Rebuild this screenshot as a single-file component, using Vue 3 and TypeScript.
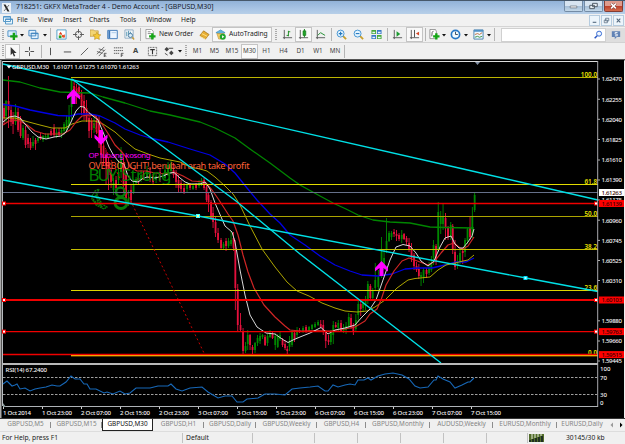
<template>
  <div class="terminal">
    <header class="title-bar">
      <svg class="app-icon" viewBox="0 0 9 10"><path d="M0 0h9v10H0z" fill="#edf2f6" /><path d="M1.5 1.5h2l4 7h-2z" fill="#222" /><path d="M7 2 2 8" stroke="#444" stroke-width=".7" /></svg>
      <span class="title">718251: GKFX MetaTrader 4 - Demo Account - [GBPUSD,M30]</span>
      <div class="window-buttons">
        <button><svg viewBox="0 0 18 10"><path d="M5.5 5h7v2h-7z" fill="#fff" stroke="#5c6672" stroke-width=".7" /></svg></button>
        <button><svg viewBox="0 0 18 10"><path d="M8 2.2h5v3.5H8zM5 4.3h5v3.5H5z" fill="#e8eef4" stroke="#4e5864" /></svg></button>
        <button class="close"><svg viewBox="0 0 18 10"><path d="m6.5 2.5 5 5m0-5-5 5" stroke="#70362f" stroke-width="2.7" /><path d="m6.5 2.5 5 5m0-5-5 5" stroke="#fff" stroke-width="1.6" /></svg></button>
      </div>
    </header>

    <nav class="menu-bar">
      <svg class="menu-icon" viewBox="0 0 10 9"><path d="M.5.5h7v5h-7zM2.5 3h7v5h-7z" fill="#e9f6fd" stroke="#5b9bc9" /><path d="M.5 1h7M2.5 3.4h7" stroke="#4a90c8" /></svg>
      <span
        v-for="item in menus"
        :key="item.label"
        :style="{ width: item.w + 'px' }"
      >{{ item.label }}</span>
      <div class="mdi-buttons">
        <button><svg viewBox="0 0 10 10"><path d="M3 7h4" stroke="#52677c" stroke-width="1.2" /></svg></button>
        <button><svg viewBox="0 0 10 10"><path d="M4 2.5h3.5v3H4zM2.5 4.5H6v3H2.5z" fill="#f2f7fb" stroke="#52677c" stroke-width=".8" /></svg></button>
        <button><svg viewBox="0 0 10 10"><path d="m3 3 4 4m0-4L3 7" stroke="#52677c" stroke-width="1.2" /></svg></button>
      </div>
    </nav>

    <div class="toolbar main-tools">
      <div
        v-for="(tool, i) in mainTools"
        :key="i"
        class="tool"
        :class="[tool.icon, { pressed: tool.pressed }]"
        :style="{ width: tool.w + 'px' }"
      >
        <svg
          v-if="icons[tool.icon]"
          viewBox="0 0 12 12"
          v-html="icons[tool.icon]"
        />
        <span v-if="tool.label">{{ tool.label }}</span>
      </div>
      <div class="search">
        <svg viewBox="0 0 12 12"><circle cx="7.3" cy="4.4" r="3" fill="#eef6ff" stroke="#3b6fd6" stroke-width="1.2" /><path d="M5 7 2 10" stroke="#2a55c0" stroke-width="1.8" /></svg>
      </div>
      <div class="community">
        <svg viewBox="0 0 12 12"><path d="M1 1.5h10v7H7L4.5 11V8.5H1z" fill="#6283b5" /><path d="M7.8 3H5v2h2.5v2H4.7" fill="none" stroke="#fff" /></svg>
      </div>
    </div>

    <div class="toolbar line-tools">
      <div
        v-for="(tool, i) in lineTools"
        :key="i"
        class="tool"
        :class="[tool.icon, { pressed: tool.pressed }]"
        :style="{ width: tool.w + 'px' }"
      >
        <svg
          v-if="icons[tool.icon]"
          viewBox="0 0 12 12"
          v-html="icons[tool.icon]"
        />
        <span v-if="tool.label">{{ tool.label }}</span>
      </div>
    </div>

    <svg class="chart" width="625" height="359" viewBox="0 59 625 359">
      <rect x="0" y="59" width="625" height="359" fill="#f0f0f0" />
      <rect x="0" y="59" width="625" height="1.5" fill="#555" />
      <rect x="1" y="60" width="623" height="358" fill="#000" />
      <path d="M0 60V418" stroke="#aaa" stroke-width="2" />
      <path d="M1.5 60V418" stroke="#555" />
      <path d="M2.5 61V406" stroke="#b8bcc0" />
      <path d="M3 61.5H598" stroke="#ddd" />
      <path d="M475 62h5l-2.5 3z" fill="#8391a5" />

      <!-- K线 -->
      <g v-for="(c, i) in candles" :key="i" :fill="c[5] ? '#008800' : '#e4103c'">
        <rect :x="c[0] - 0.4" :y="c[1]" width="0.9" :height="c[2] - c[1]" />
        <rect :x="c[0] - 0.85" :y="c[3]" width="1.8" :height="c[4] - c[3]" />
      </g>

      <g fill="none" stroke-linejoin="round">
        <polyline
          v-for="avg in averages"
          :key="avg.color"
          :points="avg.points"
          :stroke="avg.color"
          :stroke-width="avg.width"
        />
      </g>

      <!-- 信号文字 -->
      <g class="signal">
        <text x="88.5" y="181" font-size="17" textLength="29" fill="#008000">BUY</text>
        <text x="122" y="181" font-size="17" textLength="49.5" fill="#008000">Strong</text>
        <g fill="none" stroke="#087b08">
          <path d="m92 196 3-5 4-2-2 6 5 9 5 3-3 2-8-4-4-6zM93 199l5 6M95 195l7 12M96 192l2 12M94 202l9 5" stroke-width="1.3" stroke-dasharray="2 .6" />
          <circle cx="120.5" cy="192" r="4.5" stroke-width="2.6" />
          <ellipse cx="121" cy="203" rx="6" ry="5.5" stroke-width="2.8" />
        </g>
        <text x="88.5" y="158" font-size="7.8" textLength="62" fill="#f0f">OP lubang kosong</text>
        <text x="88.5" y="168.5" font-size="9.2" textLength="161" fill="#ff6038">OVERBOUGHT!,berubah arah take profit</text>
      </g>

      <path d="M3 192.5H598" stroke="#66708a" />
      <g v-for="fib in fibs" :key="fib.label">
        <path :d="`M71 ${fib.y}H598`" :stroke="fib.color" />
        <text class="fib" :x="597" :y="fib.y - 1" text-anchor="end">{{ fib.label }}</text>
      </g>
      <path d="M72 79 204 353" stroke="#c80000" stroke-dasharray="2 2.5" />
      <g v-for="level in levels" :key="level.price">
        <path :d="`M3 ${level.y}H598`" stroke="#f00000" :stroke-width="level.width" />
        <template v-if="level.handles">
          <rect x="2.5" :y="level.y - 1.5" width="3" height="3" fill="#fff" stroke="#f00" />
          <rect x="594.5" :y="level.y - 1.5" width="3" height="3" fill="#fff" stroke="#f00" />
        </template>
      </g>
      <path d="M71 355.7H598" stroke="#ffb000" />

      <g stroke="#00e0e6" stroke-width="1.4">
        <path d="M3 64 160 100 460 168.3 598 200" fill="none" />
        <path d="M3 180 198 216 526 278 598 291.5" fill="none" />
        <path d="M72 79 236 201 300 254 441 363" fill="none" />
      </g>
      <rect x="196.5" y="214.5" width="3" height="3" fill="#efff9a" stroke="#4ff" />
      <rect x="524" y="276.5" width="3" height="3" fill="#b8ffff" stroke="#0df" />

      <g fill="#f0f">
        <path v-for="a in arrows" :key="a" :transform="a" d="M0 0 6.5 7V10.5L2 7V15H-2V7L-6.5 10.5V7z" />
      </g>

      <path d="M3 364H598" stroke="#b9b9b9" stroke-width="2" />
      <path d="M597.7 61V407" stroke="#a9a9ae" />
      <path d="M6.5 65.5h5l-2.5 3z" fill="#fff" />
      <text class="caption" x="12" y="68.5" textLength="37">GBPUSD,M30</text>
      <text class="caption" x="52.5" y="68.5" textLength="86.5">1.61071 1.61275 1.61070 1.61263</text>

      <!-- 价格轴 -->
      <g v-for="p in prices" :key="p.label">
        <path :d="`M598 ${p.y}h2`" stroke="#aaa" />
        <text class="axis" x="601.5" :y="p.y + 2.4" textLength="20.5">{{ p.label }}</text>
      </g>
      <rect x="599" y="189" width="25" height="7" fill="#fff" />
      <text class="axis dark" x="601.5" y="194.8" textLength="20.5">1.61263</text>
      <g v-for="level in levels" :key="'tag' + level.price">
        <rect x="599" :y="level.y - 3.5" width="25" height="7" fill="#f00" />
        <text class="axis dark" x="601.5" :y="level.y + 2.3" textLength="20.5">{{ level.price }}</text>
      </g>

      <!-- RSI -->
      <path d="M3 377.5H597M3 394.5H597" stroke="#a0a0a0" stroke-dasharray="2.5 1.5" />
      <polyline :points="rsi" fill="none" stroke="#1768b8" stroke-width="1.1" />
      <path d="M3 406.5H598" stroke="#aeb2b6" />
      <path d="M3 403v4h3z" fill="#899" />
      <text class="caption" x="5.5" y="372.3" textLength="41.5">RSI(14) 67.2400</text>
      <text v-for="r in rsiScale" :key="r.label" class="axis" x="600" :y="r.y">{{ r.label }}</text>
      <g v-for="t in times" :key="t.label + t.x">
        <path :d="`M${t.x + 0.5} 407v2`" stroke="#ccc" />
        <text class="axis" :x="t.x" y="414.8" :textLength="t.w">{{ t.label }}</text>
      </g>
    </svg>

    <div class="tabs">
      <div
        v-for="tab in tabs"
        :key="tab.label"
        class="tab"
        :class="{ active: tab.active }"
        :style="{ width: tab.w + 'px' }"
      >
        {{ tab.label }}
      </div>
      <svg class="tab-scroll" viewBox="0 0 18 8"><path d="M6 1.5v5L3.5 4z" fill="#999" /><path d="M13 1.5v5L15.5 4z" fill="#000" /></svg>
    </div>

    <footer class="status-bar">
      <span class="help">For Help, press F1</span>
      <span class="profile">Default</span>
      <span class="cell wide" />
      <span class="cell" />
      <span class="cell" />
      <span class="cell" />
      <span class="cell" />
      <span class="cell last" />
      <span class="traffic">
        <svg viewBox="0 0 15 8"><path d="M0 0h15v8H0z" fill="#526c2a" /><path d="M3 0v5M6 0v4M9 0v3M12 0v2" stroke="#e7eee0" /><path d="M1 8V6M4 8V5M7 8V4M10 8V3M13 8V2" stroke="#111d22" stroke-width="1.5" /></svg>
        30145/30 kb
      </span>
    </footer>
  </div>
</template>

<script setup lang="ts">
interface Tool {
  icon: string
  w: number
  label?: string
  pressed?: boolean
}

const menus = [
  { label: 'File', w: 21 },
  { label: 'View', w: 25 },
  { label: 'Insert', w: 26 },
  { label: 'Charts', w: 31 },
  { label: 'Tools', w: 26 },
  { label: 'Window', w: 35 },
  { label: 'Help', w: 20 },
]

const axes = '<path d="M2.5 1v10M1 9.5h10" stroke="#555" fill="none"/>'

const icons: Record<string, string> = {
  caret: '<path d="M2 4h8L6 9z" fill="#111"/>',
  newchart: '<path d="M1 2h9v6H1z" fill="#dcefff" stroke="#4b8fc4"/><path d="M7.5 4v8M3.5 8h8" stroke="#15a015" stroke-width="2.6"/>',
  profiles: '<path d="M1 1.5h7.5v6H1zM3.5 4.5H11v6H3.5z" fill="#e5f3ff" stroke="#3d82bd"/><path d="M3 5h8" stroke="#3d82bd"/>',
  market: '<path d="M1 1h10v10H1z" fill="#fff" stroke="#4b9bc8"/><path d="m3 6 2-3 2 3z" fill="#e04020"/><path d="m6 6 3 3V6" stroke="#e04020" fill="none"/><path d="M3 7h3v3H3z" fill="#27a327"/><circle cx="8" cy="8" r="1.5" fill="#e65427"/>',
  target: '<circle cx="6" cy="6" r="3.5" fill="none" stroke="#555"/><path d="M6 0v4.5M6 7.5V12M0 6h4.5M7.5 6H12" stroke="#555"/>',
  favorites: '<path d="M0 3V1h4l1 1h4v6H0z" fill="#f3d574" stroke="#b99036" stroke-width=".7"/><path d="m7.5 3.5 1.3 2.5 3 .4-2 2 .4 3-2.7-1.4L5 11.4l.3-3-2-2 3-.4z" fill="#f5c935" stroke="#b9871a" stroke-width=".6"/>',
  terminal: '<path d="M.8 1.5h10.4v9H.8z" fill="#edf5ff" stroke="#3b76b7"/><path d="M2.5 2v8" stroke="#3b76b7" stroke-width="2"/><path d="M5 4h5" stroke="#aac8e8"/>',
  tester: '<path d="M1 1h9v9H1z" fill="#f4f7f9" stroke="#7699b5" stroke-width=".8"/><path d="M3 8V3M5 6V2M7 7V3" stroke="#4b8fae"/><circle cx="7" cy="7" r="2.3" fill="#d7ecf8" stroke="#46779e"/><path d="m9 9 2 2.5" stroke="#c79c3b" stroke-width="1.5"/>',
  order: '<path d="M1 .5h6l2 2v8H1z" fill="#fff" stroke="#888" stroke-width=".8"/><path d="M3 3h3M3 5h4" stroke="#888"/><path d="M8 4.5v7M4.5 8h7" stroke="#16a516" stroke-width="2.6"/>',
  editor: '<path d="m1 7 4-5 6 4-4 5z" fill="#e8ae32" stroke="#a4731c" stroke-width=".8"/><path d="m3 5 6 3M1 8l6 3" stroke="#fbe086"/>',
  auto: '<path d="M1 4 6 1l5 3-5 2z" fill="#5fb3df" stroke="#3a86b5" stroke-width=".7"/><path d="M2 5h8l-3 6H4z" fill="#f2ca60" stroke="#b78b35" stroke-width=".6"/><circle cx="8.5" cy="8.5" r="3.3" fill="#20a52b"/><path d="m7.7 6.8 2.5 1.7-2.5 1.7z" fill="#fff"/>',
  bars: axes + '<path d="M7 2v6M7 3h2M5 7h2" stroke="#16881b" fill="none"/>',
  candlesticks: axes + '<path d="M7 0v9" stroke="#107b16"/><path d="M5.5 2h3v5h-3z" fill="#21a329" stroke="#107b16" stroke-width=".7"/>',
  linechart: axes + '<path d="m3 7 3-3 5 3" stroke="#188a29" fill="none"/>',
  zoomin: '<path d="m7.5 7.5 3.5 3.5" stroke="#c9a02c" stroke-width="2"/><circle cx="5" cy="5" r="3.8" fill="#e4f5ff" stroke="#3d8fd0"/><path d="M5 3v4M3 5h4" stroke="#2678bd" stroke-width="1.2"/>',
  zoomout: '<path d="m7.5 7.5 3.5 3.5" stroke="#c9a02c" stroke-width="2"/><circle cx="5" cy="5" r="3.8" fill="#e4f5ff" stroke="#3d8fd0"/><path d="M3 5h4" stroke="#2678bd" stroke-width="1.2"/>',
  tile: '<path d="M.5 1h5v4.5h-5zM6.5 6.5h5V11h-5z" fill="#47a83a"/><path d="M6.5 1h5v4.5h-5zM.5 6.5h5V11h-5z" fill="#3878c6"/><path d="M1.5 3h3v1.5h-3zM7.5 3h3v1.5h-3zM1.5 8.5h3V10h-3zM7.5 8.5h3V10h-3z" fill="#e9f5ff"/>',
  scroll: axes + '<path d="m5 2.5 4 3-4 3z" fill="#1d9c30"/>',
  shift: axes + '<path d="M6 1v8" stroke="#444"/><path d="M11 3v4L7.5 5z" fill="#d64727"/>',
  indicators: '<path d="M1 .5h6l1 2v8H1z" fill="#fff" stroke="#777" stroke-width=".8"/><path d="M5 2q-2 0-2 6" stroke="#555" fill="none"/><path d="M8 4.5v7M4.5 8h7" stroke="#13a513" stroke-width="2.6"/>',
  clock: '<circle cx="6" cy="6" r="4.5" fill="#f2faff" stroke="#2777c5" stroke-width="1.8"/><path d="M6 3v3h2.5" stroke="#345" fill="none"/>',
  template: '<path d="M1 1h10v10H1z" fill="#eef7ff" stroke="#477fac"/><path d="M1 2h10" stroke="#4e91c6" stroke-width="2"/><path d="m2 6 3-1 2 1 3-2" stroke="#bb6b33" fill="none"/><path d="m2 9 3-1 2 1 3-1" stroke="#35953e" fill="none"/>',
  cursor: '<path d="M4 1v9l2-2 1.5 3.5 1.5-.7L7.5 7.5h3z" fill="#333"/>',
  cross: '<path d="M6 1v4M6 7v4M1 6h4M7 6h4" stroke="#444"/>',
  vline: '<path d="M6 2v8" stroke="#444"/>',
  hline: '<path d="M2 6.5h8" stroke="#444"/>',
  trend: '<path d="m2 10 8-8" stroke="#555"/>',
  channel: '<path d="m1 9 8-8M3 11l7-7M1 6l6 2M3 3l6 2" stroke="#555" stroke-width=".9"/><path d="M11.5 8H9v4h2.5M9 10h2" stroke="#333" fill="none" stroke-width=".8"/>',
  fibo: '<path d="M1 2h10M1 5h10M1 8h6" stroke="#555" stroke-dasharray="1.5 .6"/><path d="M11.5 8H9v4M9 10h2" stroke="#333" fill="none" stroke-width=".8"/>',
  label: '<path d="M1.5 1.5h9v9h-9z" fill="none" stroke="#555" stroke-dasharray="1 .7"/><path d="M3.5 4h5M6 4v5" stroke="#333" stroke-width="1.2"/>',
  shapes: '<path d="m3 1 2.5 2.5L3 6 .5 3.5zM8 5l2.5 2.5L8 10 5.5 7.5z" fill="#444"/><path d="M5 2.5h5M1 8l3 2" stroke="#444"/>',
}

const mainTools: Tool[] = [
  { icon: 'grip', w: 5 },
  { icon: 'newchart', w: 14 },
  { icon: 'caret', w: 6 },
  { icon: 'profiles', w: 17 },
  { icon: 'caret', w: 5 },
  { icon: 'sep', w: 6 },
  { icon: 'market', w: 16 },
  { icon: 'target', w: 18 },
  { icon: 'favorites', w: 16 },
  { icon: 'terminal', w: 18 },
  { icon: 'tester', w: 16 },
  { icon: 'sep', w: 6 },
  { icon: 'order', w: 54, label: 'New Order' },
  { icon: 'editor', w: 15 },
  { icon: 'auto', w: 60, label: 'AutoTrading', pressed: true },
  { icon: 'grip', w: 8 },
  { icon: 'bars', w: 15 },
  { icon: 'candlesticks', w: 17, pressed: true },
  { icon: 'linechart', w: 17 },
  { icon: 'sep', w: 4 },
  { icon: 'zoomin', w: 16 },
  { icon: 'zoomout', w: 18 },
  { icon: 'tile', w: 18 },
  { icon: 'sep', w: 4 },
  { icon: 'scroll', w: 17 },
  { icon: 'shift', w: 17, pressed: true },
  { icon: 'sep', w: 4 },
  { icon: 'indicators', w: 14 },
  { icon: 'caret', w: 6 },
  { icon: 'clock', w: 16 },
  { icon: 'caret', w: 6 },
  { icon: 'template', w: 18 },
  { icon: 'caret', w: 4 },
  { icon: 'sep', w: 7 },
]

const lineTools: Tool[] = [
  { icon: 'grip', w: 5 },
  { icon: 'cursor', w: 15, pressed: true },
  { icon: 'cross', w: 19 },
  { icon: 'sep', w: 4 },
  { icon: 'vline', w: 15 },
  { icon: 'hline', w: 18 },
  { icon: 'trend', w: 17 },
  { icon: 'channel', w: 17 },
  { icon: 'fibo', w: 17 },
  { icon: 'letter', w: 17, label: 'A' },
  { icon: 'label', w: 17 },
  { icon: 'shapes', w: 16 },
  { icon: 'caret', w: 5 },
  { icon: 'grip', w: 7 },
  { icon: 'period', w: 17, label: 'M1' },
  { icon: 'period', w: 17, label: 'M5' },
  { icon: 'period', w: 18, label: 'M15' },
  { icon: 'period', w: 17, label: 'M30', pressed: true },
  { icon: 'period', w: 17, label: 'H1' },
  { icon: 'period', w: 17, label: 'H4' },
  { icon: 'period', w: 17, label: 'D1' },
  { icon: 'period', w: 18, label: 'W1' },
  { icon: 'period', w: 16, label: 'MN' },
  { icon: 'sep', w: 3 },
]

// x, high, low, body top, body bottom, rising
const candles: number[][] = [
  [4, 103, 125, 108, 118, 0], [6, 100, 122, 101, 116, 1], [8.5, 76, 128, 101, 110, 0], [11, 106, 126, 110, 122, 0],
  [13, 112, 134, 118, 124, 0], [15.5, 104, 125, 112, 122, 1], [18, 108, 132, 112, 130, 0], [20.5, 116, 138, 118, 136, 0],
  [23, 125, 140, 128, 138, 1], [25.5, 126, 148, 130, 145, 0], [28, 134, 148, 138, 144, 0], [30.5, 138, 150, 142, 148, 0],
  [33, 136, 148, 142, 146, 1], [35.5, 138, 150, 140, 144, 0], [38, 137, 143, 138, 141, 1], [40.5, 133, 140, 136, 139, 0],
  [43, 135, 142, 136, 140, 1], [45.5, 133, 139, 136, 138, 1], [48, 133, 139, 134, 138, 1], [51, 129, 136, 131, 135, 0],
  [54, 124, 137, 128, 135, 0], [56.5, 129, 138, 132, 136, 1], [59, 128, 137, 132, 135, 0], [61.5, 128, 138, 130, 135, 1],
  [64, 122, 135, 124, 131, 1], [66.5, 115, 132, 120, 130, 1], [69, 105, 128, 116, 126, 1], [71.5, 78, 120, 80, 107, 1],
  [74, 80, 100, 86, 97, 0], [76.5, 84, 104, 88, 95, 0], [79, 84, 98, 87, 94, 0], [81.5, 90, 115, 93, 106, 0],
  [84, 95, 120, 101, 113, 0], [86.5, 100, 122, 108, 120, 0], [89, 112, 138, 118, 131, 0], [91.5, 118, 138, 121, 130, 0],
  [94, 116, 133, 123, 128, 1], [96.5, 115, 134, 120, 132, 0], [99, 116, 148, 122, 143, 0], [101, 135, 163, 140, 155, 0],
  [103.5, 141, 166, 146, 158, 0], [106, 150, 184, 155, 166, 0], [108.5, 158, 190, 162, 175, 0], [111, 168, 188, 170, 182, 0],
  [113.5, 178, 195, 183, 190, 1], [116, 176, 193, 180, 188, 0], [118.5, 160, 185, 172, 180, 1], [121, 147, 178, 153, 172, 1],
  [123.5, 158, 192, 164, 186, 0], [126, 168, 202, 175, 198, 0], [128.5, 190, 206, 198, 204, 1], [131, 185, 203, 190, 200, 0],
  [133.5, 180, 194, 184, 192, 1], [136, 177, 185, 179, 183, 1], [138.5, 174, 184, 178, 182, 0], [141, 170, 182, 175, 180, 1],
  [143.5, 171, 180, 174, 179, 0], [147, 166, 180, 170, 177, 1], [150, 167, 182, 172, 180, 0], [153, 174, 184, 176, 182, 0],
  [156, 174, 183, 176, 180, 1], [160, 168, 182, 172, 180, 0], [165, 165, 180, 170, 178, 1], [168, 162, 176, 165, 174, 1],
  [171, 160, 174, 163, 171, 1], [173.5, 163, 178, 170, 175, 0], [176, 170, 188, 172, 182, 0], [178.5, 175, 193, 180, 188, 0],
  [181, 180, 193, 183, 189, 0], [184, 183, 194, 188, 192, 0], [187, 182, 192, 184, 189, 1], [190, 183, 190, 185, 188, 0],
  [193, 184, 190, 186, 189, 1], [196, 183, 190, 184, 188, 0], [199, 180, 188, 183, 186, 1], [201.5, 178, 186, 180, 184, 1],
  [204, 178, 190, 180, 188, 0], [206.5, 184, 202, 187, 200, 0], [208.5, 193, 212, 195, 202, 0], [211, 200, 220, 202, 218, 0],
  [213, 207, 228, 213, 222, 0], [215.5, 217, 237, 222, 233, 0], [218, 228, 243, 233, 240, 0], [221, 238, 250, 240, 248, 0],
  [223.5, 242, 250, 244, 248, 1], [226, 238, 251, 241, 246, 0], [228.5, 238, 248, 241, 246, 1], [231, 231, 246, 240, 244, 1],
  [233.5, 232, 251, 238, 248, 0], [235.3, 240, 310, 248, 288, 0], [237.7, 284, 331, 289, 325, 0], [240.5, 313, 331, 325, 330, 0],
  [243, 328, 354, 331, 351, 0], [245.5, 342, 353, 346, 351, 1], [247.7, 330, 350, 335, 344, 1], [250, 334, 350, 335, 345, 0],
  [252.5, 345, 354, 347, 350, 0], [255, 342, 353, 343, 350, 1], [257.5, 335, 346, 338, 343, 1], [260, 333, 344, 336, 341, 1],
  [262.5, 334, 339, 335, 337, 1], [265, 335, 346, 337, 345, 0], [267.5, 334, 346, 336, 343, 1], [270, 330, 338, 333, 337, 1],
  [272.5, 332, 339, 334, 338, 0], [275.2, 333, 350, 336, 345, 1], [277.7, 334, 348, 336, 347, 1], [280, 332, 341, 335, 339, 1],
  [282.5, 338, 347, 340, 345, 0], [285, 340, 350, 344, 348, 0], [287.2, 346, 354, 349, 351, 0], [289.5, 336, 351, 341, 347, 1],
  [292, 330, 347, 332, 345, 1], [294.5, 330, 342, 333, 339, 0], [297, 327, 338, 330, 335, 1], [299.5, 328, 333, 330, 332, 0],
  [303, 326, 333, 328, 332, 1], [306, 325, 333, 327, 331, 0], [309, 326, 332, 327, 331, 1], [312, 324, 330, 325, 329, 1],
  [315, 322, 328, 324, 327, 1], [318, 320, 326, 322, 325, 1], [320.7, 320, 328, 324, 327, 0], [323.2, 320, 335, 325, 332, 0],
  [325.7, 330, 348, 332, 341, 0], [328.5, 335, 345, 340, 342, 0], [330.8, 330, 345, 333, 342, 1], [333.2, 321, 344, 325, 335, 1],
  [335.7, 322, 328, 325, 327, 0], [338.2, 320, 332, 323, 328, 1], [341, 320, 332, 323, 331, 0], [343.5, 324, 333, 328, 332, 1],
  [346, 322, 334, 326, 330, 1], [348.7, 313, 328, 317, 327, 1], [351, 314, 329, 318, 327, 0], [353.3, 323, 335, 325, 331, 0],
  [355.8, 314, 332, 320, 329, 1], [358.2, 300, 322, 304, 315, 1], [360.7, 300, 316, 304, 309, 0], [363, 301, 312, 303, 308, 1],
  [365.5, 296, 310, 299, 306, 1], [367.8, 281, 304, 284, 301, 1], [370.3, 284, 300, 286, 298, 0], [372.7, 288, 301, 291, 298, 1],
  [375.2, 263, 290, 280, 288, 1], [378.3, 270, 290, 277, 287, 1], [381.5, 237, 278, 252, 266, 1], [384, 250, 270, 258, 266, 1],
  [386.5, 218, 253, 241, 250, 1], [389, 231, 242, 233, 241, 1], [391.5, 231, 240, 233, 237, 1], [394, 229, 237, 232, 234, 0],
  [396.5, 230, 241, 234, 236, 0], [399, 233, 241, 235, 239, 0], [401.7, 230, 243, 235, 239, 1], [404, 233, 240, 234, 239, 0],
  [406.5, 236, 245, 238, 242, 0], [409, 238, 252, 243, 250, 0], [411.5, 243, 262, 248, 258, 0], [414, 253, 270, 255, 266, 0],
  [416.5, 262, 272, 266, 270, 0], [418.8, 264, 279, 269, 276, 0], [421, 272, 286, 275, 277, 1], [423.5, 268, 283, 270, 277, 1],
  [426.5, 268, 278, 270, 274, 0], [429, 262, 275, 268, 273, 1], [431.3, 256, 272, 264, 270, 1], [433.5, 240, 265, 245, 258, 1],
  [436, 244, 265, 246, 262, 0], [438.2, 202, 252, 212, 250, 1], [440.7, 211, 234, 216, 224, 1], [443, 204, 230, 217, 224, 1],
  [445.5, 213, 240, 218, 227, 0], [448, 226, 240, 227, 237, 0], [450.7, 222, 240, 225, 236, 1], [452.7, 224, 254, 226, 250, 0],
  [455, 240, 270, 252, 267, 0], [457.5, 255, 269, 263, 266, 1], [460, 250, 264, 253, 262, 1], [462.7, 248, 264, 251, 253, 0],
  [465, 238, 257, 240, 252, 1], [467.5, 228, 244, 229, 241, 1], [470, 217, 240, 228, 237, 0], [472.3, 207, 238, 217, 235, 1],
  [474.6, 192, 212, 195, 210, 1],
]

const averages = [
  { color: '#008500', width: 1.3, points: '3,80 20,82 40,88 60,92 72,92.5 90,93 103,97 125,103 150,111 170,115 200,122 215,128 235,138 250,149 270,163 290,178 300,185 320,196 333,203 346,209 358,215 373,220 390,222 410,223 430,227 445,227.5 474,228' },
  { color: '#0000e4', width: 1.3, points: '3,104.5 15,106 30,110 45,113 58,115.5 70,116 78,114 90,114 100,116 115,123 125,129 140,135 150,138 168,142 190,149 210,155 225,164 235,173 247,188 257,200 270,214 280,223 290,235 305,245 320,256 335,265 350,271 362,275 378,276 392,274 405,269 418,268 432,268 445,265 455,262 466,262 474,258' },
  { color: '#c2b900', width: 0.9, points: '3,118 15,118 25,121 40,125 52,128 65,128 72,124 82,121 95,121 103,124 115,132 125,141 135,149 148,154 160,158 170,160 180,162 190,167 200,169 207,171 215,177 225,186 233,194 237,200 241,207 250,226 262,249 275,267 287,282 297,291 309,296 322,303 335,308 345,311 357,312 367,311 375,307 385,300 397,288 408,280 415,278.5 430,277 438,270 446,265 455,263 463,261 468,260 474,255' },
  { color: '#cf2525', width: 1.2, points: '3,125 9,121 15,120 20,121 27,125 35,131 45,134 55,134 63,134 70,130 76,122 82,116 88,115 95,116 102,124 109,135 115,145 121,151 126,157 130,167 137,171 146,171 155,173 165,174 174,172 183,176 192,181 205,182 212,190 219,200 228,214 233,221 238,235 243,255 248,272 254,288 264,305 275,317 285,326 290,330 300,331 315,330.5 330,331 345,329 355,327 365,321 370,314 377,309 381,300 386,285 394,271 402,261 409,258 420,262 428,265 434,262 441,253 448,245 454,243 460,248 463,249 468,246 474,237' },
  { color: '#d8d8d8', width: 1, points: '3,122 9,117 15,116 20,118 25,124 32,132 38,137 46,139 54,137 61,136 66,132 71,122 76,111 80,106.5 84,107 88,112 93,116 98,120 103,132 109,147 114,156 119,162 124,164 128,176 132,181 138,182 142,179 147,177 155,178 163,176 170,173 174,172.5 180,178 185,182 190,184 200,184 205,182 210,189 215,203 225,226 232,232 235,242 240,270 245,295 250,315 257,327 266,333 275,334 282,339 288,342.5 293,340 300,337 310,333 321,327.5 328,334 335,330 345,328 355,325 362,317 370,309 376,300 383,280 390,260 396,247 403,244.5 410,246 416,253 421,261 428,266 434,261 440,247 445,238 451,236 455,244 459,248 463,248 468,242 472,236 474,229' },
]

const fibs = [
  { label: '100.0', y: 77.5, color: '#bdb500' },
  { label: '61.8', y: 184.5, color: '#e2dc00' },
  { label: '50.0', y: 216.5, color: '#aba400' },
  { label: '38.2', y: 249.5, color: '#c5bd00' },
  { label: '23.6', y: 290.5, color: '#dcd500' },
  { label: '0.0', y: 355.7, color: '#ffb000' },
]

const levels = [
  { price: '1.61139', y: 203.5, width: 1.3, handles: true },
  { price: '1.60103', y: 300, width: 2, handles: true },
  { price: '1.59763', y: 331.6, width: 1.4, handles: true },
  { price: '1.59515', y: 354.6, width: 1.5, handles: false },
]

const arrows = [
  'translate(73.5 89)',
  'translate(101 145) scale(1 -1)',
  'translate(381.5 261)',
]

const prices = [
  { label: '1.62470', y: 79 },
  { label: '1.62255', y: 99.3 },
  { label: '1.62040', y: 119.3 },
  { label: '1.61825', y: 139.5 },
  { label: '1.61610', y: 160 },
  { label: '1.61390', y: 180 },
  { label: '1.61175', y: 200 },
  { label: '1.60960', y: 220.2 },
  { label: '1.60745', y: 240.4 },
  { label: '1.60525', y: 260.5 },
  { label: '1.60310', y: 280.5 },
  { label: '1.59880', y: 320.8 },
  { label: '1.59660', y: 341 },
  { label: '1.59445', y: 361 },
]

const rsi = '3,384 7,381 12,386 15,385 17,384 20,389 25,388 30,391 35,389 40,388 46,387 52,385 57,386 60,386 66,382 71,376 75,379 80,379 84,384 87,384 90,389 96,389 104,393 107,392 113,394 120,391 125,394 130,393 136,388 143,388 150,388 158,386 168,386 171,384 176,389 182,391 190,388 202,387 208,392 213,395 218,398 225,396 232,396 237,402 243,402 247,399 258,398 265,394 275,394 285,395 292,389 300,388 310,387 318,386 325,391 328,391 333,385 338,387 345,385 350,384 355,385 358,380 364,380 368,378 371,380 378,376 385,374 393,373 402,375 409,379 415,386 420,388 428,387 434,380 436,380 438,376 443,379 450,382 455,388 462,385 468,382 470,382 474,378'

const rsiScale = [
  { label: '100', y: 371.2 },
  { label: '70', y: 380 },
  { label: '30', y: 396.7 },
  { label: '0', y: 405.4 },
]

const times = [
  { label: '1 Oct 2014', x: 3, w: 28 },
  { label: '1 Oct 23:00', x: 42, w: 30 },
  { label: '2 Oct 07:00', x: 81, w: 30 },
  { label: '2 Oct 15:00', x: 120, w: 30 },
  { label: '2 Oct 23:00', x: 159, w: 30 },
  { label: '3 Oct 07:00', x: 198, w: 30 },
  { label: '3 Oct 15:00', x: 237, w: 30 },
  { label: '5 Oct 23:00', x: 276, w: 30 },
  { label: '6 Oct 07:00', x: 315, w: 30 },
  { label: '6 Oct 15:00', x: 354, w: 30 },
  { label: '6 Oct 23:00', x: 393, w: 30 },
  { label: '7 Oct 07:00', x: 432, w: 30 },
  { label: '7 Oct 15:00', x: 471, w: 30 },
]

const tabs = [
  { label: 'GBPUSD,M5', w: 51 },
  { label: 'GBPUSD,M15', w: 51 },
  { label: 'GBPUSD,M30', w: 51, active: true },
  { label: 'GBPUSD,H1', w: 51 },
  { label: 'GBPUSD,Daily', w: 52 },
  { label: 'GBPUSD,Weekly', w: 61 },
  { label: 'GBPUSD,H4', w: 49 },
  { label: 'GBPUSD,Monthly', w: 64 },
  { label: 'AUDUSD,Weekly', w: 63 },
  { label: 'EURUSD,Monthly', w: 64 },
  { label: 'EURUSD,Daily', w: 50 },
]
</script>

<style>
body {
  margin: 0;
  background: #f0f0f0;
}
</style>

<style scoped>
.terminal {
  width: 625px;
  height: 444px;
  overflow: hidden;
  display: flex;
  flex-direction: column;
  background: #f0f0f0;
  color: #222;
  font-family: "Noto Sans", "Open Sans", sans-serif;
  font-size: 6.7px;
  line-height: 1;
  white-space: nowrap;
}

button {
  padding: 0;
  margin: 0;
  border: 0;
}

button svg {
  display: block;
  width: 100%;
  height: 100%;
}

.title-bar {
  box-sizing: border-box;
  height: 14px;
  flex: none;
  display: flex;
  align-items: center;
  padding-left: 2px;
  border-top: 1px solid #46586b;
  background: linear-gradient(#91b2d8, #a8c4e4 60%, #b7cfe8);
}

.app-icon {
  width: 9px;
  height: 10px;
  margin-right: 5px;
}

.title {
  flex: 1;
  color: #17202c;
  font-size: 6.95px;
}

.window-buttons {
  display: flex;
  align-self: flex-start;
  gap: 1px;
  margin-right: 2px;
}

.window-buttons button {
  box-sizing: border-box;
  width: 19px;
  height: 11px;
  border: 1px solid #738ba5;
  border-top: 0;
  border-radius: 0 0 2px 2px;
  background: linear-gradient(#d7e4f1 45%, #a4bdd6 50%, #c4d8e9);
}

.window-buttons .close {
  border-color: #843d34;
  background: linear-gradient(#df9b8d 45%, #bd3c28 50%, #d36b4b);
}

.menu-bar {
  height: 12px;
  flex: none;
  display: flex;
  align-items: center;
  background: #f1f1f1;
}

.menu-icon {
  width: 10px;
  height: 9px;
  margin: 0 4px 0 3px;
}

.mdi-buttons {
  display: flex;
  margin-left: auto;
  margin-right: 1px;
  gap: 1px;
}

.mdi-buttons button {
  box-sizing: border-box;
  width: 11px;
  height: 11px;
  border: 1px solid #b6ccdf;
  background: #edf5fb;
}

.toolbar {
  flex: none;
  display: flex;
  align-items: center;
}

.main-tools {
  box-sizing: border-box;
  height: 17px;
  border-top: 1px solid #d4d4d4;
  border-bottom: 1px solid #d2d2d2;
}

.line-tools {
  height: 16px;
}

.tool {
  box-sizing: border-box;
  flex: none;
  height: 15px;
  display: flex;
  align-items: center;
  justify-content: center;
}

.tool svg {
  flex: none;
  width: 11px;
  height: 11px;
}

.tool.caret svg {
  width: 6px;
  height: 6px;
}

.tool.pressed {
  border: 1px solid #c4c4c4;
  background: #f9f9f9;
}

.tool.order,
.tool.auto {
  justify-content: flex-start;
  padding-left: 2px;
  gap: 3px;
}

.tool.period,
.tool.letter {
  font-size: 6.3px;
  color: #444;
}

.tool.letter {
  font-weight: 700;
  font-size: 7.5px;
}

.tool.sep::before {
  content: "";
  width: 1px;
  height: 13px;
  background: #b5b5b5;
}

.tool.grip::before {
  content: "";
  width: 2px;
  height: 12px;
  background: repeating-linear-gradient(#aaa 0 1px, #eee 1px 2px);
}

.search {
  box-sizing: border-box;
  flex: none;
  width: 105px;
  height: 14px;
  margin-left: 3px;
  padding-right: 2px;
  display: flex;
  align-items: center;
  justify-content: flex-end;
  border: 1px solid #d0d0d0;
  background: #fff;
}

.search svg,
.community svg {
  width: 10px;
  height: 10px;
}

.community {
  flex: 1;
  height: 14px;
  display: flex;
  align-items: center;
  justify-content: center;
  background: #dedede;
}

.chart {
  display: block;
  flex: none;
}

.chart text {
  font-family: "Noto Sans", "Open Sans", sans-serif;
}

.chart .axis,
.chart .caption {
  fill: #f4f4f4;
  font-size: 6.1px;
  font-weight: 500;
}

.chart .axis.dark {
  fill: #300;
}

.chart .fib {
  fill: #e9e200;
  font-size: 6.3px;
  font-weight: 600;
}

.tabs {
  flex: none;
  height: 13px;
  display: flex;
  align-items: flex-start;
  border-top: 1px solid #333;
  box-sizing: border-box;
}

.tab {
  position: relative;
  box-sizing: border-box;
  flex: none;
  height: 12px;
  padding-top: 2px;
  text-align: center;
  color: #858585;
  font-size: 6.4px;
}

.tab::after {
  content: "";
  position: absolute;
  right: 0;
  top: 3px;
  width: 1px;
  height: 6px;
  background: #8c8c8c;
}

.tab:last-of-type::after {
  display: none;
}

.tab.active {
  border: 1px solid #222;
  border-top: 0;
  background: #fff;
  color: #111;
}

.tab.active::after {
  display: none;
}

.tab-scroll {
  width: 18px;
  height: 8px;
  margin-top: 2px;
}

.status-bar {
  flex: 1;
  display: flex;
  align-items: center;
  border-top: 1px solid #ddd;
}

.status-bar > span {
  box-sizing: border-box;
  flex: none;
  height: 10px;
  display: flex;
  align-items: center;
  border-right: 1px solid #c2c2c2;
}

.status-bar > .help {
  width: 183px;
  padding-left: 2px;
}

.status-bar > .profile {
  width: 70px;
  padding-left: 3px;
}

.status-bar > .cell {
  width: 43px;
}

.status-bar > .cell.wide {
  width: 62px;
}

.status-bar > .cell.last {
  width: 41px;
}

.status-bar > .traffic {
  flex: 1;
  gap: 22px;
  padding-left: 1px;
  border-right: 0;
}

.traffic svg {
  flex: none;
  width: 15px;
  height: 8px;
}
</style>
